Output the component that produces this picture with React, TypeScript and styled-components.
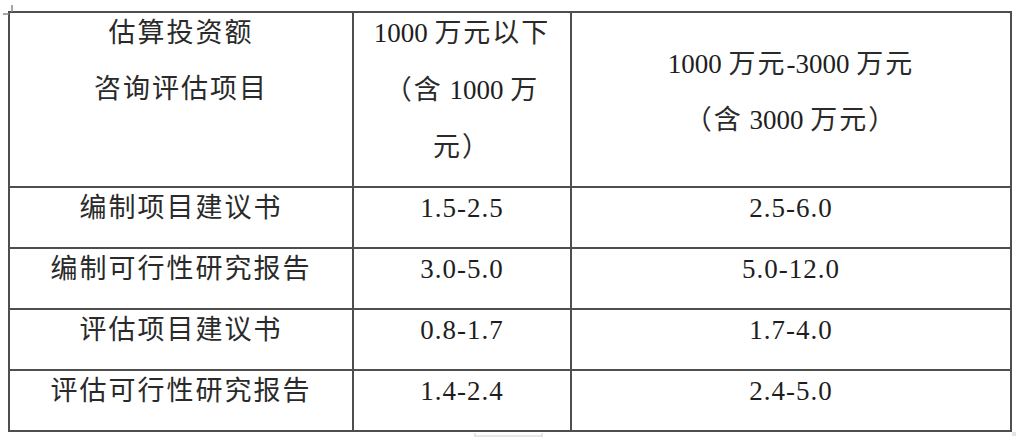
import React, { FC } from 'react';
import styled, { createGlobalStyle } from 'styled-components';

const GlobalStyle = createGlobalStyle`
  html, body {
    margin: 0;
    padding: 0;
    background: #ffffff;
  }
`;

const Page = styled.div`
  position: relative;
  width: 1021px;
  height: 441px;
  padding: 11px 0 0 8px;
  box-sizing: border-box;
  font-family: "Liberation Serif", "Noto Sans CJK SC", serif;
  font-size: 27px;
  color: #1e1e1e;
`;

const FeeTable = styled.table`
  border-collapse: collapse;
  table-layout: fixed;
  width: 1002px;
`;

const HeaderRow = styled.tr`
  height: 175px;
`;

const DataRow = styled.tr`
  height: 61px;
`;

const Cell = styled.td<{ $valign?: 'top' | 'middle' }>`
  border: 2px solid #4e4e4e;
  padding: 0;
  text-align: center;
  vertical-align: ${(p) => p.$valign || 'top'};
`;

const Line = styled.div<{ $gap?: number }>`
  line-height: 40px;
  height: 40px;
  margin-bottom: ${(p) => (p.$gap ?? 16)}px;
  white-space: nowrap;
`;

const Cjk = styled.span`
  letter-spacing: 2px;
  color: #2a2a2a;
`;

const Num = styled.span`
  letter-spacing: 1px;
`;

const Marks = styled.svg`
  position: absolute;
  left: 0;
  top: 0;
  pointer-events: none;
`;

const rows = [
  { name: '编制项目建议书', low: '1.5-2.5', high: '2.5-6.0' },
  { name: '编制可行性研究报告', low: '3.0-5.0', high: '5.0-12.0' },
  { name: '评估项目建议书', low: '0.8-1.7', high: '1.7-4.0' },
  { name: '评估可行性研究报告', low: '1.4-2.4', high: '2.4-5.0' },
];

const App: FC = () => {
  return (
    <Page>
      <GlobalStyle />
      <FeeTable>
        <colgroup>
          <col style={{ width: 344 }} />
          <col style={{ width: 218 }} />
          <col style={{ width: 440 }} />
        </colgroup>
        <tbody>
          <HeaderRow>
            <Cell>
              <Line><Cjk>估算投资额</Cjk></Line>
              <Line><Cjk>咨询评估项目</Cjk></Line>
            </Cell>
            <Cell>
              <Line $gap={17}>1000 <Cjk>万元以下</Cjk></Line>
              <Line $gap={17}><Cjk>（含</Cjk> 1000 <Cjk>万</Cjk></Line>
              <Line $gap={0}><Cjk>元）</Cjk></Line>
            </Cell>
            <Cell $valign="middle">
              <Line>1000 <Cjk>万元</Cjk>-3000 <Cjk>万元</Cjk></Line>
              <Line><Cjk>（含</Cjk> 3000 <Cjk>万元）</Cjk></Line>
            </Cell>
          </HeaderRow>
          {rows.map((r) => (
            <DataRow key={r.name}>
              <Cell>
                <Line $gap={0}><Cjk>{r.name}</Cjk></Line>
              </Cell>
              <Cell>
                <Line $gap={0}><Num>{r.low}</Num></Line>
              </Cell>
              <Cell>
                <Line $gap={0}><Num>{r.high}</Num></Line>
              </Cell>
            </DataRow>
          ))}
        </tbody>
      </FeeTable>
      <Marks width="1021" height="441">
        <path d="M12 5 V12 M3 14 H9" stroke="#8a8a8a" strokeWidth="1.5" fill="none" />
        <path d="M475 433 V437 M542 433 V437 M475 436 H542" stroke="#d0d0d0" strokeWidth="1" fill="none" />
        <rect x="1012" y="432" width="4" height="4" fill="#e4e4e4" />
      </Marks>
    </Page>
  );
};

export default App;
